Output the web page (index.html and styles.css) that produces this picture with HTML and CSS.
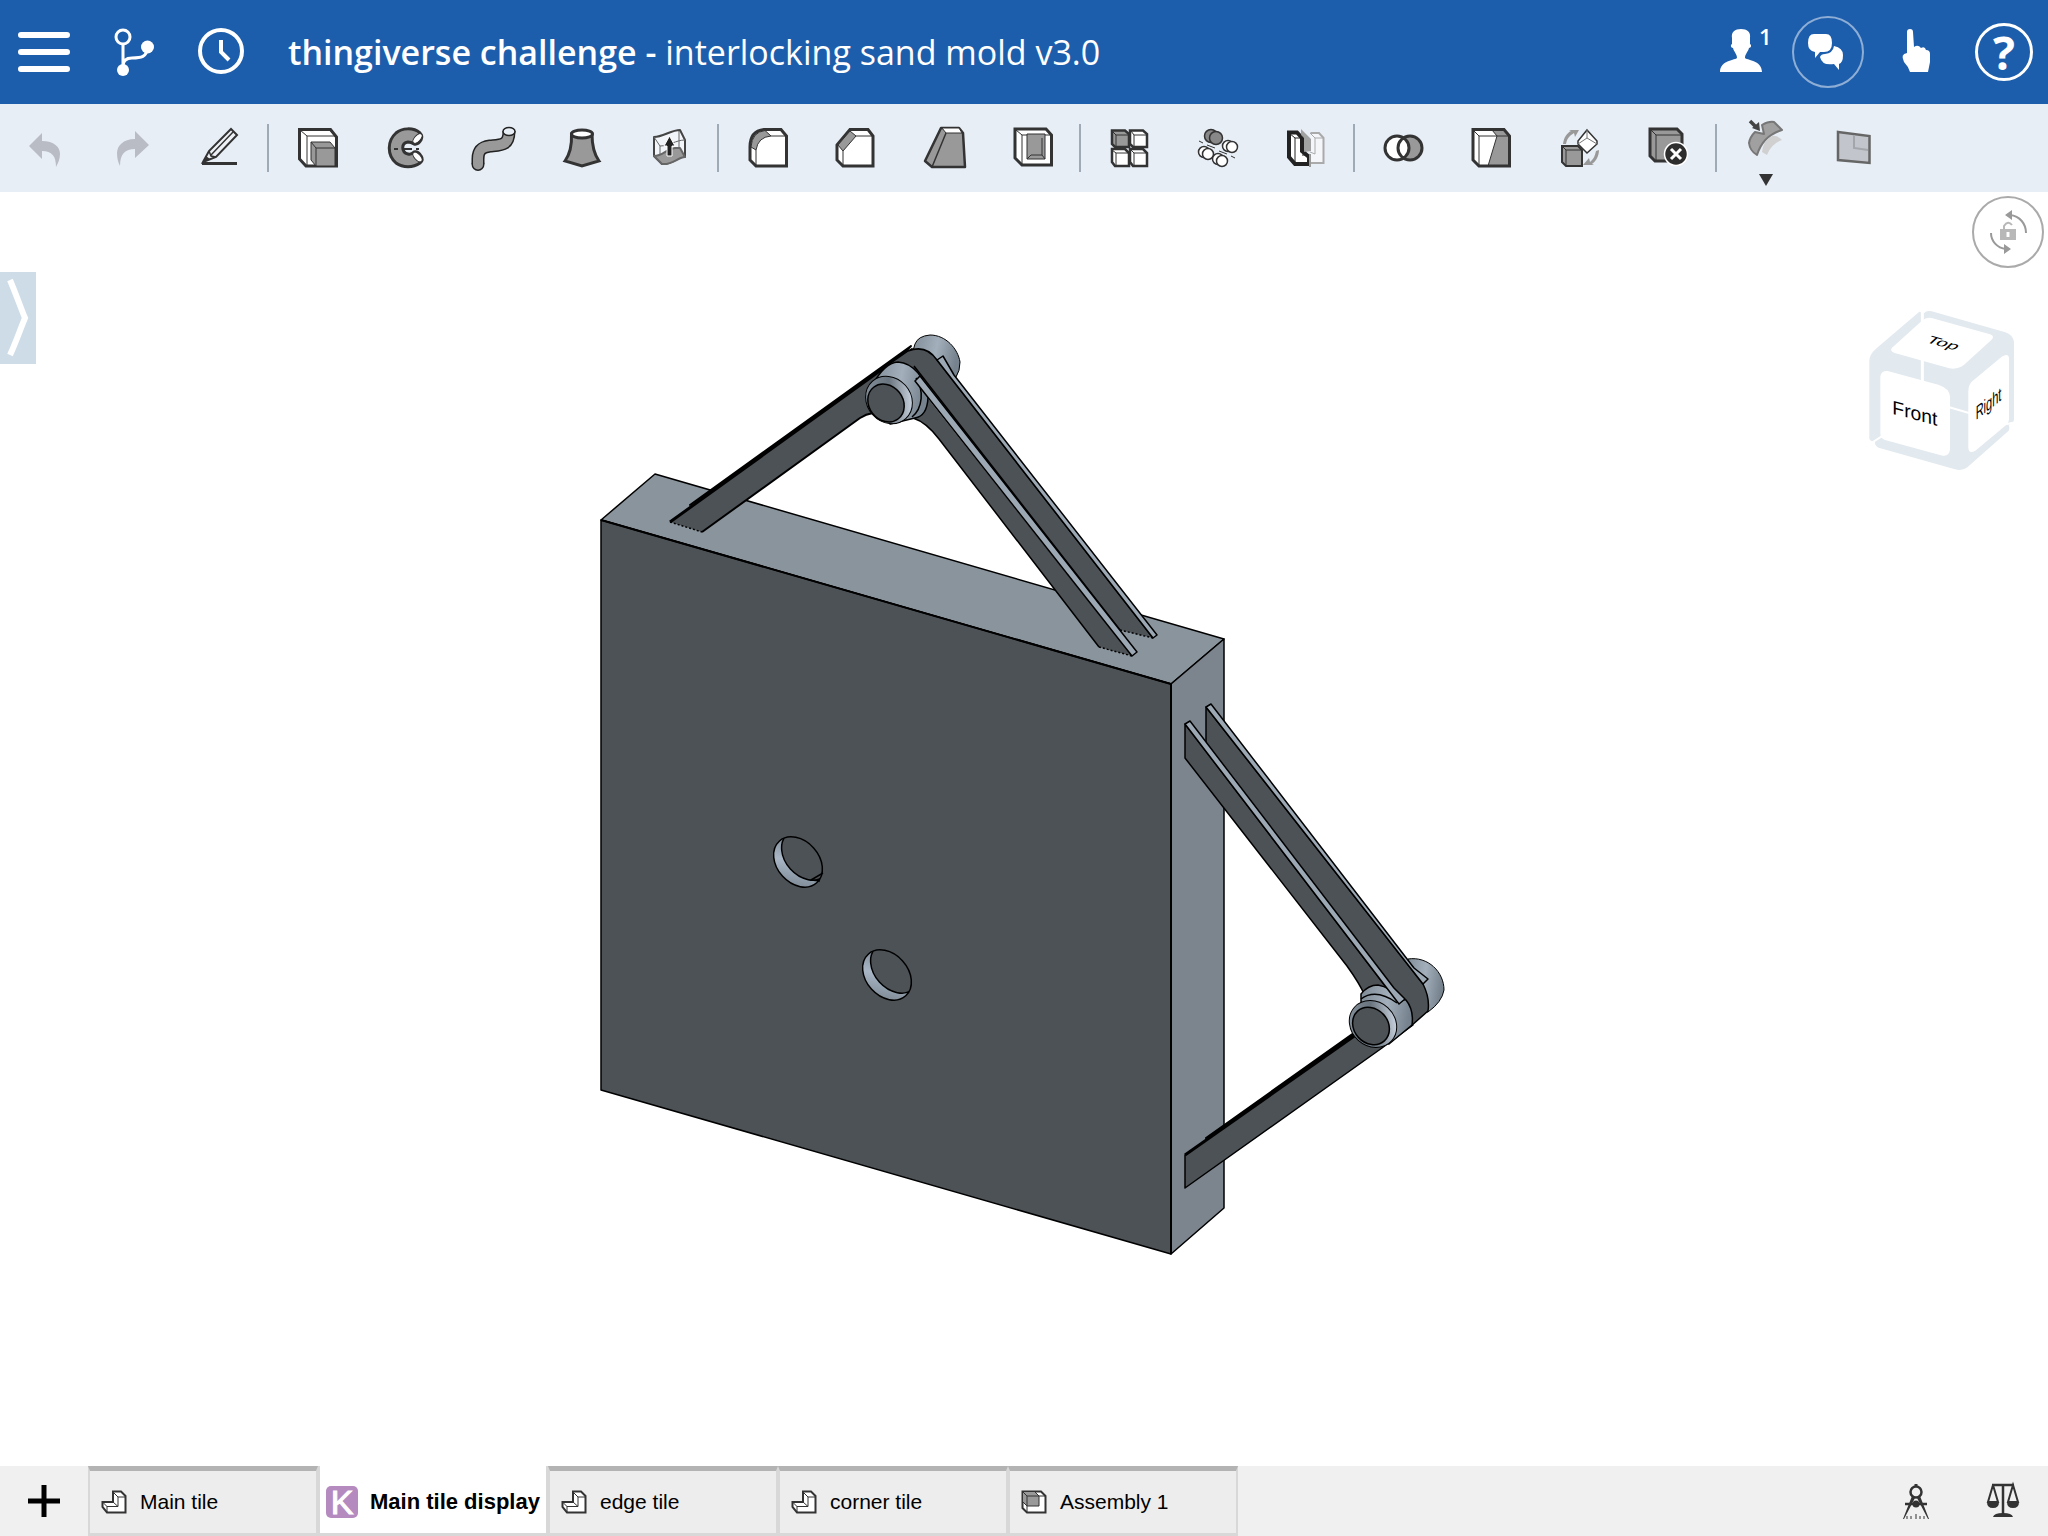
FILE: index.html
```html
<!DOCTYPE html>
<html lang="en">
<head>
<meta charset="utf-8">
<meta name="viewport" content="width=device-width, initial-scale=1">
<title>thingiverse challenge - interlocking sand mold v3.0</title>
<link rel="stylesheet" href="styles.css">
</head>
<body>
<div class="app">
  <header class="header">
    <button class="cell" aria-label="Menu"><svg class="icon wide" viewBox="0 0 56 48"><path d="M5 7H51M5 24H51M5 41H51" fill="none" stroke="#fff" stroke-width="6" stroke-linecap="round"/></svg></button>
    <button class="cell" aria-label="Versions"><svg class="icon" viewBox="0 0 48 48"><g fill="none" stroke="#fff" stroke-width="3"><circle cx="15" cy="9" r="7"/><path d="M15 16V42M15 38C15 32 19 30 24 30C33 30 39 29 39 20"/></g><g fill="#fff"><circle cx="39.500" cy="19" r="6.500"/><circle cx="15" cy="42" r="6"/></g></svg></button>
    <button class="cell" aria-label="History"><svg class="icon" viewBox="0 0 48 48"><g fill="none" stroke="#fff" stroke-width="4"><circle cx="25" cy="23" r="21"/><path d="M25 12V24L33 32"/></g></svg></button>
    <h1 class="title"><strong>thingiverse challenge - </strong>interlocking sand mold v3.0</h1>
    <button class="cell" aria-label="Collaborators"><svg class="icon" viewBox="0 0 48 48"><path fill="#fff" d="M25 1C31 1 35 4 34 10V16C36 17 35 20 33 20C32 24 29 26 29 30C30 32 46 32 46 44H4C4 32 20 32 21 30C21 26 18 24 17 20C15 20 14 17 16 16V10C15 4 19 1 25 1Z"/></svg><span class="count">1</span></button>
    <button class="cell" aria-label="Comments"><span class="ring"><svg class="icon" viewBox="0 0 48 48"><path fill="#fff" d="M10 6H22Q28 6 28 15Q28 24 20 24H16L11 30V24Q4 23 4 15Q4 6 10 6ZM30 18Q39 20 39 27Q39 35 35 36V42L30 36Q18 38 16 29Q17 26 21 26Q29 25 30 18Z"/></svg></span></button>
    <button class="cell" aria-label="Touch help"><svg class="icon" viewBox="0 0 48 48"><path fill="#fff" d="M15 4Q15 1 18 1Q21 1 21 4L22 19Q26 16 29 20Q33 18 34 22Q38 22 38 26V34Q37 39 36 44H18Q16 38 12 34Q8 26 15 25Z"/></svg></button>
    <button class="cell" aria-label="Help"><span class="help">?</span></button>
  </header>

  <div class="toolbar" role="toolbar" aria-label="Part Studio tools">
    <button class="cell" aria-label="Undo"><svg class="icon" viewBox="0 0 48 48"><path fill="#b9bcc5" d="M9 22L22 9V17C34 17 40 23 40 30C40 35 38 39 36 43C36 32 32 27 22 27V35Z"/></svg></button>
    <button class="cell" aria-label="Redo"><svg class="icon" viewBox="0 0 48 48"><path fill="#b9bcc5" d="M41 21L27 7V15C15 15 9 22 9 29C9 34 10 38 12 42C12 30 17 25 27 25V34Z"/></svg></button>
    <button class="cell" aria-label="Sketch"><svg class="icon" viewBox="0 0 48 48"><path d="M6 39.500H41" stroke="#333" stroke-width="3"/><path d="M7 38L13 27L35 5L41 11L20 33Z" fill="#eef2f7" stroke="#333" stroke-width="2"/><path d="M13 27L15 32L20 33M15 31L37 8" fill="none" stroke="#333" stroke-width="1.500"/><path d="M7 38L10 32L14 35Z" fill="#333"/></svg></button>
    <span class="sep"></span>
    <button class="cell" aria-label="Extrude"><svg class="icon" viewBox="0 0 48 48"><path d="M5.500 5.500H36.500L42.500 13V42H12L5.500 35Z" fill="#fff" stroke="#333" stroke-width="3"/><path d="M6 6L13 12H42M13 12V42M36 6L41 12" fill="none" stroke="#333"/><path d="M17 18H36L41 24V42H22L17 36Z" fill="#999" stroke="#333"/><path d="M17 18L22 24H41M22 24V42" fill="none" stroke="#333"/></svg></button>
    <button class="cell" aria-label="Revolve"><svg class="icon" viewBox="0 0 48 48"><path d="M38 9C31 3 20 4 14 9C5 17 5 31 14 39C21 44 31 44 38 39Q42 36 39 32Q36 27 32 28Q29 31 26 30C19 28 19 19 26 18Q29 18 32 20Q36 21 39 16Q41 12 38 9Z" fill="#999" stroke="#333" stroke-width="3" stroke-linejoin="round"/><ellipse cx="35.500" cy="14.500" rx="3" ry="6" transform="rotate(42 35.500 14.500)" fill="#fff" stroke="#333"/><ellipse cx="35.500" cy="33" rx="3" ry="6" transform="rotate(-42 35.500 33)" fill="#fff" stroke="#333"/><path d="M12 25H16M20 25H30M34 25H37" stroke="#333" stroke-width="2"/></svg></button>
    <button class="cell" aria-label="Sweep"><svg class="icon" viewBox="0 0 48 48"><path d="M8 40V35C8 25 13 23 20 22C31 21 39 22 39 7" fill="none" stroke="#222" stroke-width="13" /><circle cx="8" cy="40.500" r="6.500" fill="#222"/><path d="M8 40V35C8 25 13 23 20 22C31 21 39 22 39 7" fill="none" stroke="#999" stroke-width="10"/><circle cx="8" cy="40.500" r="5" fill="#999"/><ellipse cx="39" cy="7.500" rx="6" ry="4" fill="#e8eef6" stroke="#222" stroke-width="1.500"/></svg></button>
    <button class="cell" aria-label="Loft"><svg class="icon" viewBox="0 0 48 48"><path d="M13.500 10C14 22 12 30 7 37L24 42L41 37C36 30 34 22 34 10Z" fill="#999" stroke="#333" stroke-width="3"/><ellipse cx="24" cy="10" rx="10.500" ry="4" fill="#fff" stroke="#333" stroke-width="3"/></svg></button>
    <button class="cell" aria-label="Thicken"><svg class="icon" viewBox="0 0 48 48"><path d="M8 13C17 13 25 6 34 6L39 16V33C33 31 27 41 16 40L8 32Z" fill="#f2f5f9" stroke="#444" stroke-width="2" stroke-linejoin="round"/><path d="M8 13L14 22C23 22 30 16 39 16M14 22V38M33 7V24" fill="none" stroke="#666"/><path d="M8 32C17 32 20 25 29 24H34L39 33C32 33 27 41 16 40Z" fill="#999" stroke="#666" stroke-width="2" stroke-linejoin="round"/><path d="M21 32V22H18L23.500 12L29 22H26V32Z" fill="#222" stroke="#fff"/></svg></button>
    <span class="sep"></span>
    <button class="cell" aria-label="Fillet"><svg class="icon" viewBox="0 0 48 48"><path d="M6 23Q6 7 20 5.500H37L42.500 12V42H12L6 36Z" fill="#fff" stroke="#333" stroke-width="3"/><path d="M7 23Q8 8 21 6.500L27 12Q14 13 12 26Z" fill="#999" stroke="#333"/><path d="M12 26V42M27 12H42M37 6L42 12" fill="none" stroke="#333"/></svg></button>
    <button class="cell" aria-label="Chamfer"><svg class="icon" viewBox="0 0 48 48"><path d="M5 21L18 5.500H36L41 12V42H11L5 36Z" fill="#fff" stroke="#333" stroke-width="3"/><path d="M6 21L18 7L24 12L11 27Z" fill="#999" stroke="#333"/><path d="M11 27V42M24 12H41" fill="none" stroke="#333"/></svg></button>
    <button class="cell" aria-label="Draft"><svg class="icon" viewBox="0 0 48 48"><path d="M5 37L21 4H39L43 9L45 43H12Z" fill="#999" stroke="#333" stroke-width="2.500" stroke-linejoin="round"/><path d="M22 4H39L42 9H26Z" fill="#fff" stroke="#333"/><path d="M26 9L12 43" stroke="#333" stroke-width="1.500"/></svg></button>
    <button class="cell" aria-label="Shell"><svg class="icon" viewBox="0 0 48 48"><path d="M7 5H38L43.500 11V41H14L7 34Z" fill="#fff" stroke="#333" stroke-width="3"/><path d="M8 6L14 11H43M14 11V41M38 6L43 11" fill="none" stroke="#333"/><path d="M19 10H37V35H19Z" fill="#999" stroke="#333"/><path d="M19 35L23 31H34L37 35M34 31V14" fill="none" stroke="#333"/></svg></button>
    <span class="sep"></span>
    <button class="cell" aria-label="Linear pattern"><svg class="icon" viewBox="0 0 48 48"><g stroke="#333" stroke-width="2.500"><path d="M6 6.500H19L23 10V23H9L6 20Z" fill="#999"/><path d="M24 6.500H37L41 10V23H27L24 20Z" fill="#fff"/><path d="M6 25H19L23 29V42H9L6 38Z" fill="#fff"/><path d="M24 25H37L41 29V42H27L24 38Z" fill="#fff"/></g><path d="M6 7L10 11H22M10 11V22M25 7L28 11H40M28 11V22M6 26L10 29H22M10 29V41M25 26L28 29H40M28 29V41" fill="none" stroke="#333"/></svg></button>
    <button class="cell" aria-label="Circular pattern"><svg class="icon" viewBox="0 0 48 48"><g stroke="#333" stroke-width="1.500"><g fill="#888"><circle cx="17" cy="12" r="6.500"/><circle cx="22" cy="14" r="6.500"/></g><g fill="#fff"><circle cx="34" cy="22" r="5.500"/><circle cx="38" cy="23" r="5.500"/><circle cx="10" cy="28" r="5.500"/><circle cx="14" cy="30" r="5.500"/><circle cx="24" cy="35" r="5.500"/><circle cx="28" cy="37" r="5.500"/></g><path d="M5 17L9 19M13 21L21 24M25 27L33 30M37 32L41 34" stroke-width="1"/></g></svg></button>
    <button class="cell" aria-label="Mirror"><svg class="icon" viewBox="0 0 48 48"><path d="M28.500 9H37L41.500 14V39H28V31" fill="#f4f6f9" stroke="#aaa" stroke-width="2"/><path d="M28 9L33 14H41M33 14V30L28 28" fill="none" stroke="#aaa"/><path d="M7 8.500H15L20 14V27L27 33V40H13L7 33Z" fill="#fff" stroke="#222" stroke-width="4"/><path d="M7 9L13 14H19M13 14V39M20 31H26" fill="none" stroke="#222"/><path d="M19 5L29 15V27L22 28V14L19 11Z" fill="#999" fill-opacity=".9"/><path d="M28 30V43" stroke="#999" stroke-width="2"/></svg></button>
    <span class="sep"></span>
    <button class="cell" aria-label="Boolean"><svg class="icon" viewBox="0 0 48 48"><circle cx="30" cy="24" r="12" fill="#999"/><circle cx="17" cy="24" r="12" fill="#fff"/><g fill="none" stroke="#333" stroke-width="3"><circle cx="30" cy="24" r="12"/><circle cx="17" cy="24" r="12"/></g></svg></button>
    <button class="cell" aria-label="Split"><svg class="icon" viewBox="0 0 48 48"><path d="M5 5.500H36L41.500 12V42H11L5 36Z" fill="#fff"/><path d="M24 6H36L41 12V42H20L29 12Z" fill="#999"/><path d="M5 6L11 12H41M11 12V42M24 6L29 12L20 42M36 6L41 12" fill="none" stroke="#333"/><path d="M5 5.500H36L41.500 12V42H11L5 36Z" fill="none" stroke="#333" stroke-width="3"/></svg></button>
    <button class="cell" aria-label="Transform"><svg class="icon" viewBox="0 0 48 48"><path d="M6 22H22L26 26V42H10L6 38Z" fill="#999" stroke="#333" stroke-width="2"/><path d="M6 22L10 26H26M10 26V42" fill="none" stroke="#333"/><path d="M31 6L41 17V20L31 29L22 20V17Z" fill="#fff" stroke="#333" stroke-width="1.500"/><path d="M31 6V14L22 20M31 14L41 20" fill="none" stroke="#777"/><path d="M7 20C8 13 11 9 15 7L13 6H23L19 13L18 9C13 12 11 15 10 20ZM43 26C43 33 39 38 36 40L38 41H27L33 34L34 38C38 35 39 31 40 27Z" fill="#999"/></svg></button>
    <button class="cell" aria-label="Delete part"><svg class="icon" viewBox="0 0 48 48"><path d="M6 5H33L38 10V37H11L6 32Z" fill="#999" stroke="#333" stroke-width="3"/><path d="M6 5L12 11H38M12 11V37" fill="none" stroke="#333"/><circle cx="32" cy="30" r="11.500" fill="#2d2d2d" stroke="#fff" stroke-width="1.500"/><path d="M27 25L37 35M37 25L27 35" stroke="#fff" stroke-width="3"/></svg></button>
    <span class="sep"></span>
    <button class="cell" aria-label="Surface tools"><svg class="icon tall" viewBox="0 -16 48 80"><path d="M13 8L22 10L20 1Q27 -3 32 -2L40 6C27 10 19 18 15 31Q8 27 7 19Q8 13 13 8Z" fill="#a0a0a0" stroke="#777" stroke-width="2" stroke-linejoin="round"/><path d="M40 16Q35 11 30 12Q21 17 20 28L25 31Q29 20 40 16Z" fill="#d0d0d0"/><path d="M8 -3L14 3" stroke="#444" stroke-width="3.500"/><path d="M18 7L17 -2L10 4Z" fill="#444"/><path d="M17 50H31L24 62Z" fill="#333"/></svg></button>
    <button class="cell" aria-label="Flatten"><svg class="icon" viewBox="0 0 48 48"><path d="M8 8L39.500 12V39L8 36Z" fill="#c2c5cb" stroke="#666" stroke-width="2.500"/><path d="M24 11V24L38 26" fill="none" stroke="#a3a6ab" stroke-width="2"/></svg></button>
  </div>

  <main class="stage">
    <svg class="model" viewBox="0 192 2048 1274" role="img" aria-label="Main tile display">
      <defs>
        <linearGradient id="metal" x1="0" y1="0" x2="1" y2="0.200"><stop offset="0" stop-color="#7e8a94"/><stop offset=".55" stop-color="#a3b0bc"/><stop offset="1" stop-color="#76838e"/></linearGradient>
        <linearGradient id="rim" x1="0" y1="1" x2="1" y2="0"><stop offset="0" stop-color="#8d99a5"/><stop offset=".5" stop-color="#69747e"/><stop offset=".85" stop-color="#c6d0dc"/><stop offset="1" stop-color="#8592a0"/></linearGradient>
        <linearGradient id="bore" x1="0" y1="0" x2="1" y2="1"><stop offset="0" stop-color="#6c7680"/><stop offset=".5" stop-color="#a8b6c6"/><stop offset="1" stop-color="#717c86"/></linearGradient>
        <clipPath id="hole"><ellipse rx="28" ry="21" transform="rotate(48)"/></clipPath>
        <g id="bore-hole">
          <ellipse rx="28" ry="21" transform="rotate(48)" fill="url(#bore)"/>
          <g clip-path="url(#hole)"><ellipse cx="0" cy="0" rx="28" ry="21" transform="translate(8 -7) rotate(48)" fill="#4d5256" stroke="#000" stroke-width="1.500"/></g>
          <ellipse rx="28" ry="21" transform="rotate(48)" fill="none" stroke="#000" stroke-width="1.500"/>
        </g>
      </defs>
      <g stroke="#000" stroke-width="1.500" stroke-linejoin="round">
        <path d="M601 520L655 474L1224 639L1171 684Z" fill="#8a949c"/>
        <path d="M1171 684L1224 639V1208L1171 1254Z" fill="#7c848d"/>
        <path d="M601 520L1171 684V1254L601 1090Z" fill="#4d5256"/>
        <path d="M601 520L1171 684V1254" fill="none" stroke-width="2"/>
      </g>
      <use href="#bore-hole" x="798" y="862"/>
      <path d="M811 880L823 873M811 880L820 881" stroke="#000" stroke-width="1.500"/>
      <use href="#bore-hole" x="887" y="975"/>

      <g stroke="#000" stroke-width="1.500" stroke-linejoin="round">
        <path d="M912 354L915 344Q918 336 930 335C946 335 958 349 960 362Q960 371 956 377L936 366Z" fill="url(#metal)" stroke-width="1"/>
        <path d="M690 505L911 346L890 368Z" fill="#000" stroke-width="2"/>
        <path d="M670 522L888 365L913 349L930 380L873 413Q866 414 860 418L702 532Z" fill="#4d5256" stroke="none"/>
        <path d="M702 532L860 418Q866 414 873 413" fill="none" stroke-width="2"/>
        <path d="M670 522L888 365L913 349" fill="none" stroke-width="3"/>
        <path d="M888 365L908 351Q926 344 937 360L1153 638L1120 630L914 381Z" fill="#4d5256" stroke="none"/>
        <path d="M888 365L908 351Q926 344 937 360L1153 638M1120 630L914 366" fill="none"/>
        <path d="M937 360L943 356L954 375L1157 635L1153 638Z" fill="#9ca8b4"/>
        <path d="M914 381L1132 656L1099 647L939 439Q926 422 913 418Z" fill="#4d5256" stroke="none"/>
        <path d="M1099 647L939 439Q926 422 913 418" fill="none"/>
        <path d="M670 522L702 532M1099 647L1132 656M1120 630L1153 638" fill="none" stroke-dasharray="2 2"/>
        <path d="M872 386Q884 363 898 362C913 363 926 378 928 398Q927 416 915 418L890 424Z" fill="url(#metal)"/>
        <path d="M916 378C924 390 923 408 912 417" fill="none"/>
        <ellipse cx="889" cy="400" rx="25" ry="22" transform="rotate(48 889 400)" fill="url(#rim)" stroke-width="1"/>
        <ellipse cx="886" cy="403" rx="20" ry="17" transform="rotate(52 886 403)" fill="#4d5256"/>
        <path d="M915 381L920 376L1137 652L1132 656Z" fill="#9ca8b4"/>
      </g>

      <g stroke="#000" stroke-width="1.500" stroke-linejoin="round">
        <path d="M1408 959C1428 956 1444 972 1444 990Q1442 1002 1428 1012L1405 1015Z" fill="url(#metal)" stroke-width="1"/>
        <path d="M1206 1138L1358 1030L1362 1040Z" fill="#000" stroke-width="2"/>
        <path d="M1185 1155L1360 1031L1413 1025L1382 1048L1185 1188Z" fill="#4d5256"/>
        <path d="M1185 1155L1360 1032" fill="none" stroke-width="3"/>
        <path d="M1206 707L1423 984Q1430 998 1428 1011L1411 1026L1399 1003L1206 755Z" fill="#4d5256"/>
        <path d="M1206 707L1211 704L1414 968L1428 979L1423 984Z" fill="#9ca8b4"/>
        <path d="M1185 724L1399 1004L1365 996Q1360 984 1347 966L1185 758Z" fill="#4d5256"/>
        <path d="M1361 1001V994Q1368 985 1378 985Q1390 987 1400 999L1406 1000Q1414 1010 1412 1025L1389 1044L1365 1043Z" fill="url(#metal)"/>
        <path d="M1361 999Q1376 988 1397 1003" fill="none"/>
        <ellipse cx="1373" cy="1024" rx="25" ry="22" transform="rotate(42 1373 1024)" fill="url(#rim)" stroke-width="1"/>
        <ellipse cx="1371" cy="1026" rx="20" ry="17" transform="rotate(48 1371 1026)" fill="#4d5256"/>
        <path d="M1185 724L1190 721L1394 988L1405 999L1399 1004Z" fill="#9ca8b4"/>
      </g>
    </svg>

    <button class="drawer" aria-label="Open feature list"><svg class="chevron" viewBox="0 0 36 92"><path d="M10 8C16 22 20 34 25 46C20 58 16 70 10 83" fill="none" stroke="#fff" stroke-width="6"/></svg></button>
    <button class="lock" aria-label="Lock rotation"><svg class="icon" viewBox="0 0 48 48"><g fill="none" stroke="#999" stroke-width="2"><path d="M26 7C36 8 42 16 42 25M22 41C13 40 7 33 7 25"/></g><path d="M28 2V12L21 7ZM20 36V46L27 41Z" fill="#999"/><path d="M16 21H32V32H16Z" fill="#b8b8b8"/><path d="M20 21V18Q24 12 28 17" fill="none" stroke="#b8b8b8" stroke-width="2"/><path d="M24 24V29" stroke="#fff" stroke-width="3"/></svg></button>
    <svg class="viewcube" viewBox="144 150 444 483" role="img" aria-label="View cube">
      <path fill="#e2e9ef" d="M298 155L168 266Q148 284 148 302V536Q152 545 165 546Q164 558 176 563L405 628Q428 634 442 622L566 512Q570 504 566 494Q582 490 582 476V246Q578 224 556 217L335 154Q318 151 312 160Z"/>
      <g fill="#fff"><path d="M335 174L510 223Q526 229 514 240L434 313Q414 330 388 325L224 279Q208 273 216 263L305 183Q318 171 335 174Z"/><path d="M203 333L355 374Q390 386 390 410V568Q388 590 368 587L195 540Q181 536 181 520V350Q182 332 203 333Z"/><path d="M455 365L545 290Q567 278 567 296V478Q566 490 555 498L466 572Q445 584 445 562V392Q446 374 455 365Z"/></g>
      <path d="M307 150V188M307 300V365" stroke="#fff" stroke-width="9"/><path d="M388 442L447 459M154 549L190 526M548 494L580 488" stroke="#fff" stroke-width="6"/>
      <g class="facename"><text transform="matrix(1 .27 0 1 217 461)">Front</text><text transform="matrix(.98 .27 -.5 .48 314 246)">Top</text><text transform="matrix(.57 -.45 0 1 467 481)">Right</text></g>
    </svg>
  </main>

  <footer class="footer">
    <button class="cell" aria-label="Add tab"><svg class="icon" viewBox="0 0 48 48"><path d="M8 24H40M24 8V40" stroke="#000" stroke-width="5"/></svg></button>
    <nav class="tabs" role="tablist" aria-label="Document tabs">
      <button class="tab" role="tab"><svg class="tabicon" viewBox="0 0 26 24"><path d="M1.500 12H12V1.500H20L24.500 6V22.500H6L1.500 17Z" fill="#fff" stroke="#333" stroke-width="2"/><path d="M1.500 12L6 16.500H17L12 12M12 2L17 7H24M17 7V16.500M6 16V22" fill="none" stroke="#333"/></svg>Main tile</button>
      <button class="tab active" role="tab" aria-selected="true"><span class="badge">K</span>Main tile display</button>
      <button class="tab" role="tab"><svg class="tabicon" viewBox="0 0 26 24"><path d="M1.500 12H12V1.500H20L24.500 6V22.500H6L1.500 17Z" fill="#fff" stroke="#333" stroke-width="2"/><path d="M1.500 12L6 16.500H17L12 12M12 2L17 7H24M17 7V16.500M6 16V22" fill="none" stroke="#333"/></svg>edge tile</button>
      <button class="tab" role="tab"><svg class="tabicon" viewBox="0 0 26 24"><path d="M1.500 12H12V1.500H20L24.500 6V22.500H6L1.500 17Z" fill="#fff" stroke="#333" stroke-width="2"/><path d="M1.500 12L6 16.500H17L12 12M12 2L17 7H24M17 7V16.500M6 16V22" fill="none" stroke="#333"/></svg>corner tile</button>
      <button class="tab" role="tab"><svg class="tabicon" viewBox="0 0 26 24"><path d="M1.500 1.500H20L24.500 6V22.500H6L1.500 18Z" fill="#fff" stroke="#333" stroke-width="2"/><path d="M2 2H14L18 6V16H6L2 12Z" fill="#999"/><path d="M2 2L6 6H24M6 6V22M6 16H18V6L14 2M2 12L6 16" fill="none" stroke="#333"/></svg>Assembly 1</button>
    </nav>
    <button class="cell end" aria-label="Measure"><svg class="icon" viewBox="0 0 48 48"><g fill="none" stroke="#333"><circle cx="24" cy="15" r="5.500" stroke-width="2.500"/><path d="M24 7V10" stroke-width="3"/><path d="M13 27H35" stroke-width="2.500"/></g><path d="M20 19L23 21L12 42H11ZM28 19L25 21L36 42H37Z" fill="#333"/><circle cx="24" cy="27" r="3.500" fill="#333"/><path d="M15 39V42M19 39V42M24 37V42M28 39V42M32 39V42" stroke="#333"/></svg></button>
    <button class="cell" aria-label="Mass properties"><svg class="icon" viewBox="0 0 48 48"><path d="M12 8H34M23 8V37" stroke="#333" stroke-width="2.500"/><path d="M13 8L8 25H18L13 8M33 8L28 25H38Z" fill="none" stroke="#333" stroke-width="2"/><path d="M7 25H19Q19 31 13 31Q7 31 7 25ZM27 25H39Q39 31 33 31Q27 31 27 25ZM13 40Q14 36 23 36Q32 36 33 40Z" fill="#333"/></svg></button>
  </footer>
</div>
</body>
</html>
```
FILE: styles.css
```css
* {
  box-sizing: border-box;
}

body {
  margin: 0;
  background: #fff;
  font-family: "Liberation Sans", Arial, sans-serif;
}

button {
  margin: 0;
  padding: 0;
  border: 0;
  background: none;
  color: inherit;
  font: inherit;
  cursor: pointer;
}

.app {
  display: flex;
  flex-direction: column;
  min-height: 100vh;
}

.header,
.toolbar,
.footer {
  display: flex;
  align-items: stretch;
  flex: none;
}

.header {
  height: 104px;
  background: #1d5eac;
  color: #fff;
}

.cell {
  position: relative;
  display: flex;
  flex: none;
  align-items: center;
  justify-content: center;
  width: 88px;
}

.icon {
  display: block;
  flex: none;
  width: 48px;
  height: 48px;
}

.icon.wide {
  width: 56px;
}

.icon.tall {
  height: 80px;
}

.title {
  flex: 1;
  margin: 0;
  padding-left: 24px;
  font-family: "Open Sans", sans-serif;
  font-size: 34px;
  font-weight: 400;
  line-height: 104px;
  white-space: nowrap;
}

.title strong {
  font-weight: 600;
}

.count {
  position: absolute;
  top: 24px;
  left: 63px;
  font-family: "Open Sans", sans-serif;
  font-size: 22px;
  font-weight: 600;
  line-height: 24px;
}

.ring,
.help,
.lock {
  display: flex;
  align-items: center;
  justify-content: center;
  border-radius: 50%;
}

.ring {
  width: 72px;
  height: 72px;
  border: 2px solid #8eaed6;
}

.help {
  width: 58px;
  height: 58px;
  border: 3px solid #fff;
  font-family: "Open Sans", sans-serif;
  font-size: 46px;
  font-weight: 700;
  line-height: 52px;
}

.toolbar {
  height: 88px;
  background: #e7eef6;
}

.sep {
  align-self: center;
  width: 2px;
  height: 48px;
  margin: 0 5px 0 3px;
  background: #9eaab6;
}

.stage {
  position: relative;
  display: flex;
  flex: 1;
  min-height: 0;
}

.model {
  display: block;
  flex: 1;
  width: 100%;
}

.drawer {
  position: absolute;
  top: 80px;
  left: 0;
  width: 36px;
  height: 92px;
  background: #cedce8;
}

.chevron {
  display: block;
  width: 36px;
  height: 92px;
}

.lock {
  position: absolute;
  top: 4px;
  right: 4px;
  width: 72px;
  height: 72px;
  border: 2px solid #aaa;
}

.viewcube {
  position: absolute;
  top: 118px;
  right: 32px;
  width: 148px;
  height: 161px;
}

.facename {
  fill: #000;
  font-size: 58px;
}

.footer {
  height: 70px;
  background: #f0f0f0;
}

.tabs {
  display: flex;
}

.tab {
  display: flex;
  align-items: center;
  gap: 13px;
  width: 230px;
  padding: 0 0 0 11px;
  border: 2px solid #d8d8d8;
  border-top: 5px solid #b3b3b3;
  border-bottom-width: 3px;
  background: #ededed;
  font-size: 21px;
  white-space: nowrap;
}

.tab.active {
  gap: 12px;
  padding: 5px 0 0 6px;
  border-top: 0;
  background: #fff;
  font-size: 22px;
  font-weight: 700;
}

.tabicon {
  flex: none;
  width: 26px;
  height: 24px;
}

.badge {
  width: 32px;
  height: 32px;
  border-radius: 5px;
  background: #b58abf;
  color: #fff;
  font-size: 34px;
  font-weight: 400;
  line-height: 32px;
  text-align: center;
  -webkit-text-stroke: 1px #fff;
}

.end {
  margin-left: auto;
}
```
